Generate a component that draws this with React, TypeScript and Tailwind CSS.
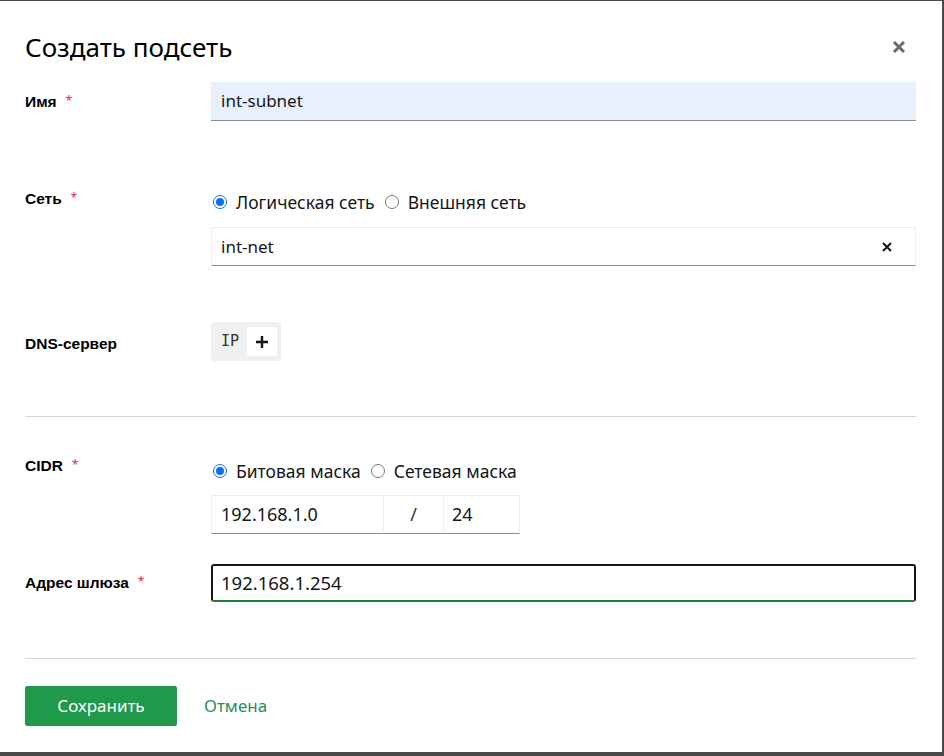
import React from 'react';

function Label({ text, required }: { text: string; required?: boolean }) {
  return (
    <div className="text-[15.5px] font-bold text-black" style={{ fontFamily: '"Liberation Sans", Arial, sans-serif' }}>
      {text}
      {required && <span className="ml-[9px] text-[16px] font-normal text-[#e8315b]">*</span>}
    </div>
  );
}

function Radio({ checked, label }: { checked?: boolean; label: string }) {
  return (
    <label className="flex items-center gap-[9px]">
      {checked ? (
        <span className="flex h-[14px] w-[14px] items-center justify-center rounded-full border border-[#0f6fe8] bg-white">
          <span className="h-[8px] w-[8px] rounded-full bg-[#0f6fe8]" />
        </span>
      ) : (
        <span className="h-[14px] w-[14px] rounded-full border border-[#767676] bg-white" />
      )}
      <span>{label}</span>
    </label>
  );
}

export default function App() {
  return (
    <div className="min-h-screen bg-[#4a4a4a] pt-px pr-[2px]" style={{ fontFamily: '"Noto Sans", "Open Sans", sans-serif' }}>
      <div className="h-[751px] bg-white px-[25px] pr-[26px] text-[#161616]">
        {/* Header */}
        <div className="flex items-center justify-between pt-[28px]">
          <h1 className="text-[26px] leading-[36px] text-black">Создать подсеть</h1>
          <button className="mr-[10px] text-[#6b6b6b]">
            <svg width="14" height="14" viewBox="0 0 14 14">
              <path d="M2 2 L12 12 M12 2 L2 12" stroke="currentColor" strokeWidth="3" />
            </svg>
          </button>
        </div>

        {/* Имя */}
        <div className="mt-[17px] grid grid-cols-[186px_1fr] items-center">
          <Label text="Имя" required />
          <div className="flex h-[39px] items-center border-b border-[#8d8d8d] bg-[#e8f0fe] px-[10px] text-[17px]">
            int-subnet
          </div>
        </div>

        {/* Сеть */}
        <div className="mt-[69px] grid grid-cols-[186px_1fr]">
          <div className="-mt-[3px]">
            <Label text="Сеть" required />
          </div>
          <div>
            <div className="flex h-[24px] items-center gap-[10px] pl-[2px] text-[17.5px]">
              <Radio checked label="Логическая сеть" />
              <Radio label="Внешняя сеть" />
            </div>
            <div className="mt-[13px] flex h-[39px] items-center justify-between border border-b-[#8d8d8d] border-[#ececec] px-[9px] text-[17px]">
              <span>int-net</span>
              <svg width="10" height="10" viewBox="0 0 10 10" className="mr-[14px]">
                <path d="M1 1 L9 9 M9 1 L1 9" stroke="#161616" strokeWidth="2" />
              </svg>
            </div>
          </div>
        </div>

        {/* DNS */}
        <div className="mt-[56px] grid grid-cols-[186px_1fr] items-center">
          <div className="pt-[4px]">
            <Label text="DNS-сервер" />
          </div>
          <div className="flex h-[39px] w-[70px] items-center gap-[8px] rounded-[3px] bg-[#f0f0f0] pl-[10px]">
            <span className="text-[15px] text-[#333]" style={{ fontFamily: '"DejaVu Sans Mono", monospace' }}>IP</span>
            <span className="flex h-[29px] w-[30px] items-center justify-center rounded-[2px] bg-white">
              <svg width="12" height="12" viewBox="0 0 12 12">
                <path d="M6 0 V12 M0 6 H12" stroke="#161616" strokeWidth="2.4" />
              </svg>
            </span>
          </div>
        </div>

        <div className="mt-[55px] h-px bg-[#d6d6d6]" />

        {/* CIDR */}
        <div className="mt-[42px] grid grid-cols-[186px_1fr]">
          <div className="-mt-[5px]">
            <Label text="CIDR" required />
          </div>
          <div>
            <div className="flex h-[24px] items-center gap-[10px] pl-[2px] text-[17.5px]">
              <Radio checked label="Битовая маска" />
              <Radio label="Сетевая маска" />
            </div>
            <div className="mt-[12px] flex h-[39px] w-[309px] border border-[#ececec] border-b-[#8d8d8d] text-[18px]">
              <div className="flex w-[172px] items-center border-r border-[#ececec] px-[9px]">192.168.1.0</div>
              <div className="flex w-[60px] items-center justify-center border-r border-[#ececec] text-[#333]">/</div>
              <div className="flex flex-1 items-center px-[8px]">24</div>
            </div>
          </div>
        </div>

        {/* Адрес шлюза */}
        <div className="mt-[30px] grid grid-cols-[186px_1fr] items-center">
          <Label text="Адрес шлюза" required />
          <div className="flex h-[38px] items-center rounded-[3px] border-2 border-[#161616] border-b-[#198038] px-[8px] text-[18.5px]">
            192.168.1.254
          </div>
        </div>

        <div className="mt-[56px] h-px bg-[#d6d6d6]" />

        {/* Actions */}
        <div className="mt-[27px] flex items-center gap-[27px]">
          <button className="h-[40px] w-[152px] rounded-[2px] bg-[#1f9a4b] text-[17px] text-white">Сохранить</button>
          <button className="text-[17px] text-[#2b8c55]">Отмена</button>
        </div>
      </div>
    </div>
  );
}
